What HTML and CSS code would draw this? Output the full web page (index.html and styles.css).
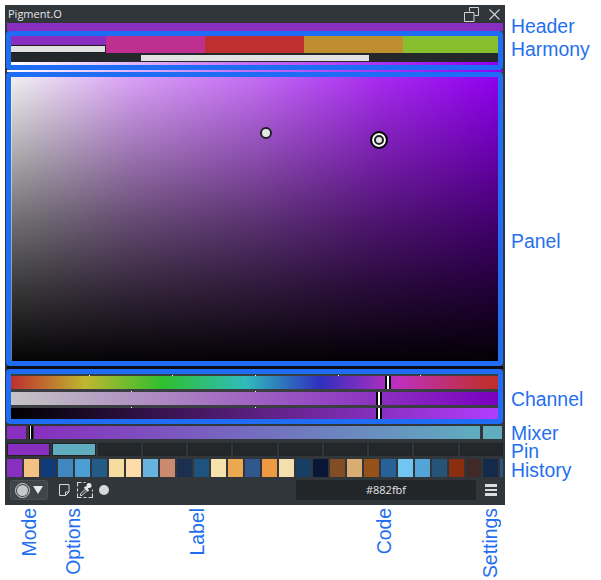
FILE: index.html
```html
<!DOCTYPE html>
<html lang="en">
<head>
<meta charset="utf-8">
<title>Pigment.O</title>
<link rel="stylesheet" href="styles.css">
</head>
<body>
<div class="canvas">
  <main class="window">
    <header class="title">
      <span class="title-text">Pigment.O</span>
      <span class="title-icons">
        <svg class="ico-float" width="15" height="15" viewBox="0 0 15 15"><path d="M5.5 4.5V.5h9v8h-4M.5 5.5h9.500v9H.5z" fill="none" stroke="#d4d4d4"/></svg>
        <svg class="ico-close" width="11" height="11" viewBox="0 0 11 11"><path d="M.5.500l10 10M10.500.500l-10 10" fill="none" stroke="#d4d4d4" stroke-width="1.200"/></svg>
      </span>
    </header>
    <div class="header-strip"></div>

    <section class="blue harmony">
      <div class="harmony-swatches">
        <div class="hs hs-a"><span class="hs-bar"></span></div>
        <div class="hs hs-b"></div>
        <div class="hs hs-c"></div>
        <div class="hs hs-d"></div>
        <div class="hs hs-e"></div>
      </div>
      <div class="harmony-range"><span class="range-bar"></span></div>
      <div class="strip"></div>
    </section>
    <div class="strip-gap"></div>

    <section class="blue panel">
      <span class="dot dot-small"></span>
      <span class="dot dot-big"></span>
    </section>
    <div class="strip-dark"></div>

    <section class="blue channel">
      <div class="bar bar-1"><span class="tick t1"></span><span class="tick t2"></span><span class="tick t3"></span><span class="tick t4"></span><span class="tick t5"></span><span class="grip g1"></span></div>
      <div class="bar bar-2"><span class="tick t6"></span><span class="tick t3"></span><span class="grip g2"></span></div>
      <div class="bar bar-3"><span class="tick t6"></span><span class="tick t3"></span><span class="grip g2"></span></div>
    </section>

    <section class="mixer">
      <div class="mix-end mix-left"></div>
      <div class="mix-grip"></div>
      <div class="mix-bar"></div>
      <div class="mix-end mix-right"></div>
    </section>

    <section class="pins">
      <div class="pin pin-a"></div><div class="pin pin-b"></div><div class="pin"></div><div class="pin"></div><div class="pin"></div><div class="pin"></div><div class="pin"></div><div class="pin"></div><div class="pin"></div><div class="pin"></div><div class="pin"></div>
    </section>

    <section class="history">
      <i class="c01"></i><i class="c02"></i><i class="c03"></i><i class="c04"></i><i class="c05"></i><i class="c06"></i><i class="c07"></i><i class="c08"></i><i class="c09"></i><i class="c10"></i><i class="c11"></i><i class="c12"></i><i class="c13"></i><i class="c14"></i><i class="c15"></i><i class="c16"></i><i class="c17"></i><i class="c18"></i><i class="c19"></i><i class="c20"></i><i class="c21"></i><i class="c22"></i><i class="c23"></i><i class="c24"></i><i class="c25"></i><i class="c26"></i><i class="c27"></i><i class="c28"></i><i class="c29"></i><i class="c30"></i>
    </section>

    <footer class="footer">
      <div class="mode">
        <svg width="15" height="15" viewBox="0 0 15 15"><circle cx="7.500" cy="7.500" r="7" fill="none" stroke="#d2d2d2"/><circle cx="7.500" cy="7.500" r="5.500" fill="#c8c8c8"/></svg>
        <svg width="10" height="8" viewBox="0 0 10 8"><path d="M0 0h10L5 8z" fill="#e8e8e8"/></svg>
      </div>
      <svg class="ico-note" width="11" height="12" viewBox="0 0 11 12"><path d="M.500.500h9.500v7.500l-3.500 3.500h-6zM10 8H6.500v3.500" fill="none" stroke="#d8d8d8"/></svg>
      <svg class="ico-drop" width="16" height="16" viewBox="0 0 16 16">
        <path d="M.5 4.500v-4h4M6.500.5h2M.5 6.500v3M.5 11.500v4h4M6.500 15.500h3M11.500 15.500h4v-4M15.500 9.500v-2" fill="none" stroke="#d8d8d8" stroke-width="1.200"/>
        <path d="M3.500 13.500v-1.500l5.500-5.500 1.500 1.500-5.500 5.500z" fill="#31363b" stroke="#e0e0e0"/>
        <circle cx="12" cy="3.500" r="2.500" fill="#e8e8e8"/>
        <path d="M7.500 5l4 4" stroke="#e8e8e8" stroke-width="2"/>
        <path d="M9 6.500l3.500-3" stroke="#e8e8e8" stroke-width="2.500"/>
      </svg>
      <span class="ico-dot"></span>
      <div class="code">#882fbf</div>
      <div class="menu"><span></span><span></span><span></span></div>
    </footer>
  </main>

  <span class="note n-header">Header</span>
  <span class="note n-harmony">Harmony</span>
  <span class="note n-panel">Panel</span>
  <span class="note n-channel">Channel</span>
  <span class="note n-mixer">Mixer</span>
  <span class="note n-pin">Pin</span>
  <span class="note n-history">History</span>
  <span class="note up n-mode">Mode</span>
  <span class="note up n-options">Options</span>
  <span class="note up n-label">Label</span>
  <span class="note up n-code">Code</span>
  <span class="note up n-settings">Settings</span>
</div>
</body>
</html>
```

FILE: styles.css
```css
* { box-sizing: border-box; }
html, body { margin: 0; padding: 0; background: #fff; }
.canvas { position: relative; width: 601px; height: 580px; overflow: hidden; }

.window {
  position: absolute; left: 5px; top: 5px; width: 500px; height: 500px;
  background: #31363b; display: flex; flex-direction: column;
}

.title { height: 18px; display: flex; align-items: center; justify-content: space-between; padding: 0 5px 0 3px; flex: none; }
.title-text { font: 11px/18px "Open Sans", sans-serif; color: #e6e6e6; }
.title-icons { display: flex; align-items: center; gap: 10px; }
.ico-float, .ico-close { display: block; }

.header-strip { height: 8px; margin: 0 2px; background: #882fbf; flex: none; }

.blue { border: 5px solid #1f6df5; border-radius: 4px; margin: 0 2px 0 1px; flex: none; }

.harmony { height: 39px; display: flex; flex-direction: column; background: #2a2d30; }
.harmony-swatches { display: grid; grid-template-columns: 94.500px 99.500px 99px 99px 95px; height: 17px; flex: none; }
.hs { position: relative; }
.hs-a { background: #882fbf; }
.hs-b { background: #bf2f8f; }
.hs-c { background: #bf2f2f; }
.hs-d { background: #bf8f2f; }
.hs-e { background: #88bf2f; }
.hs-bar { position: absolute; left: 0; right: 0; top: 9px; height: 8px; background: #e2e2e2; border: solid #1c1e20; border-width: 1px 1px 1px 0; }
.harmony-range { height: 9px; background: #25282b; padding: 2px 0 1px 130px; flex: none; }
.range-bar { display: block; width: 228px; height: 6px; background: #e2e2e2; }
.strip { height: 3px; flex: none; background: linear-gradient(to right, #fff 0%, #c46cf4 50%, #8f00ee 100%); }
.strip-gap { height: 2px; margin: 0 2px; background: linear-gradient(to right, #fff 0%, #c46cf4 50%, #8f00ee 100%); flex: none; }
.strip-dark { height: 3px; margin: 0 2px; background: #0b0d12; flex: none; }

.panel {
  position: relative; height: 294px;
  background:
    linear-gradient(to right, rgba(255,255,255,.45) 0, rgba(255,255,255,.45) 1px, rgba(255,255,255,0) 1px),
    linear-gradient(to bottom, rgba(0,0,0,0) 0%, rgba(0,0,0,.26) 25%, rgba(0,0,0,.53) 50%, rgba(0,0,0,.77) 75%, rgba(0,0,0,.98) 100%),
    linear-gradient(to right, #f0f0f0 0%, #d9a0f6 25%, #c46cf4 50%, #a82cf0 75%, #8f00ee 100%);
}
.dot { position: absolute; border-radius: 50%; background: #e6e6e6; }
.dot-small { left: 249px; top: 50px; width: 12px; height: 12px; border: 2px solid #1e2124; }
.dot-big { left: 359px; top: 54px; width: 18px; height: 18px; border: 2px solid #000; box-shadow: inset 0 0 0 2px #fff, inset 0 0 0 4px #1e2124; }

.channel { height: 55px; padding-top: 2px; display: flex; flex-direction: column; gap: 3px; background: #3a3e42; }
.bar { position: relative; height: 13px; flex: none; }
.bar-1 { background: linear-gradient(to right, #bf2f2f 0px, #bfb72f 74px, #2fbf2f 152px, #2fbcbc 234px, #2f2fbf 309px, #bf2fbf 386px, #bf2f2f 478px, #bf2f2f 100%); }
.bar-2 { background: linear-gradient(to right, #c4c4c4 0%, #7a00c0 100%); }
.bar-3 { height: 11px; background: linear-gradient(to right, #000 0%, #882fbf 75%, #b33cff 100%); }
.grip { position: absolute; top: 0; bottom: 0; width: 6px; background: #fff; border-left: 2px solid #000; border-right: 2px solid #000; }
.g1 { left: 374px; }
.g2 { left: 365px; }
.tick { position: absolute; top: -1px; width: 1px; height: 1px; background: #fff; }
.t1 { left: 78px; } .t2 { left: 161px; } .t3 { left: 244px; } .t4 { left: 327px; } .t5 { left: 409px; } .t6 { left: 120px; }

.mixer { display: flex; height: 13px; margin: 2px 3px 0 2px; flex: none; }
.mix-end { flex: none; }
.mix-left { width: 19px; background: #882fbf; }
.mix-grip { width: 4px; margin-left: 3px; background: #fff; border-left: 1px solid #000; border-right: 2px solid #000; }
.mix-bar { width: 449px; margin-left: 1px; background: linear-gradient(to right, #882fbf, #5fadbf); }
.mix-right { width: 19px; margin-left: 3px; background: #5fadbf; }

.pins { display: flex; height: 13px; margin: 4px 2px 0; flex: none; gap: 2px; }
.pin { flex: 1; background: #25282b; border: 1px solid #212427; }
.pin-a { background: #882fbf; }
.pin-b { background: #5fadbf; }

.history { display: flex; gap: 2px; height: 18px; margin: 3px 2px 0; overflow: hidden; flex: none; }
.history i { display: block; width: 15px; flex: none; }
.c01 { background: #882fbf; } .c02 { background: #f4c084; } .c03 { background: #0f3b78; }
.c04 { background: #3f88c0; } .c05 { background: #4aa0d4; } .c06 { background: #235a86; }
.c07 { background: #f6dc9e; } .c08 { background: #fddcaa; } .c09 { background: #68b2de; }
.c10 { background: #c98a70; } .c11 { background: #1a304e; } .c12 { background: #1e5380; }
.c13 { background: #f7e2ac; } .c14 { background: #eba850; } .c15 { background: #30588c; }
.c16 { background: #ee9a42; } .c17 { background: #f6dfae; } .c18 { background: #173f63; }
.c19 { background: #0b1535; } .c20 { background: #824c24; } .c21 { background: #d8ac72; }
.c22 { background: #96501a; } .c23 { background: #266298; } .c24 { background: #70c6f0; }
.c25 { background: #55a4d8; } .c26 { background: #255478; } .c27 { background: #8a2e10; }
.c28 { background: #402a28; } .c29 { background: #132a4a; } .c30 { background: #2a5680; }

.footer { flex: 1; display: flex; align-items: center; padding: 0 7px 2px 5px; }
.mode {
  width: 38px; height: 20px; display: flex; align-items: center; gap: 3px; padding-left: 4px;
  background: #40454a; border: 1px solid #4c5156; border-radius: 3px; flex: none;
}
.ico-note { margin-left: 11px; flex: none; }
.ico-drop { margin-left: 7px; flex: none; }
.ico-dot { width: 10px; height: 10px; margin-left: 6px; border-radius: 50%; background: #d8d8d8; flex: none; }
.code {
  width: 180px; height: 20px; margin-left: 187px; flex: none; background: #232629; color: #e4e4e4;
  font: 11px/20px "Open Sans", sans-serif; text-align: center;
}
.menu { margin-left: 9px; width: 12px; display: flex; flex-direction: column; gap: 2px; flex: none; }
.menu span { height: 2.500px; background: #dcdcdc; }

.note { position: absolute; font: 19.400px/17px "Liberation Sans", Arial, sans-serif; color: #1f6ff0; white-space: nowrap; }
.n-header { left: 511px; top: 18px; }
.n-harmony { left: 511px; top: 41px; }
.n-panel { left: 511px; top: 233px; }
.n-channel { left: 511px; top: 391px; }
.n-mixer { left: 511px; top: 425px; }
.n-pin { left: 511px; top: 443px; }
.n-history { left: 511px; top: 462px; }
.up { writing-mode: vertical-rl; transform: rotate(180deg); }
.n-mode { left: 21px; top: 508px; }
.n-options { left: 65px; top: 508px; }
.n-label { left: 189px; top: 508px; }
.n-code { left: 376px; top: 508px; }
.n-settings { left: 482px; top: 508px; }
```
